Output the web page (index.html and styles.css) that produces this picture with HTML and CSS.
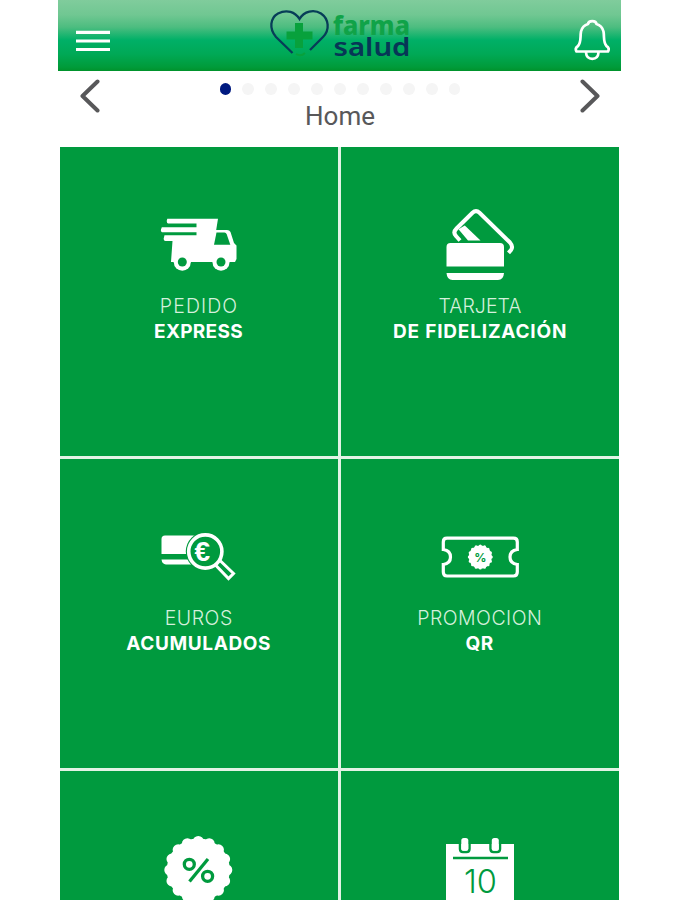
FILE: index.html
```html
<!DOCTYPE html>
<html lang="es">
<head>
<meta charset="utf-8">
<title>Farma Salud</title>
<link rel="stylesheet" href="styles.css">
</head>
<body>
<div class="app">
  <header class="header">
    <svg class="menu" viewBox="0 0 34 22"><path d="M0 2.3H34M0 11H34M0 19.5H34"/></svg>
    <svg class="logo" viewBox="268 8 144 54">
      <path class="heart" d="M291.5 53L275 37C268 29 269 18 277 13.500C286 9 294 12 298.500 19C303 11 313 9 320 13.500C328 19 329 30 322 37L309 50"/>
      <path class="cross" d="M294 23h8v8.500h9.500v8H302V48h-8v-8.500h-8.500v-8h8.500z"/>
      <path class="smile" d="M295 54q5 3 9-1"/>
      <text class="word farma" x="332" y="34.500" textLength="77" lengthAdjust="spacingAndGlyphs">farma</text>
      <text class="word salud" x="332.500" y="56.300" textLength="77" lengthAdjust="spacingAndGlyphs">salud</text>
    </svg>
    <svg class="bell" viewBox="574 18 36 44"><path d="M576.500 51.500Q574.500 48 578 46C581.500 42 580 37 581 31.500Q582.500 25.500 588 24C588.500 20.300 596 20.300 596.500 24Q602 25.500 603.500 31.500C604.500 37 603 42 606.500 46Q610 48 608 51.500ZM586 52.500Q586.500 58.800 592.300 58.800T598.500 52.500"/></svg>
  </header>
  <nav class="pager">
    <svg class="arrow" viewBox="0 0 20 34"><path d="M17.500 2.500L2.500 17L17.500 31.500"/></svg>
    <div class="middle">
      <div class="dots"><i class="on"></i><i></i><i></i><i></i><i></i><i></i><i></i><i></i><i></i><i></i><i></i></div>
      <h1>Home</h1>
    </div>
    <svg class="arrow" viewBox="0 0 20 34"><path d="M2.500 2.500L17.500 17L2.500 31.500"/></svg>
  </nav>
  <main class="grid">
    <a class="tile">
      <svg class="icon" viewBox="159 207 80 76">
        <path class="w" d="M167.300 218.700H218L216.200 230H227Q229.500 230 230.500 232L234 243L236.500 245.500V259L235 262H171L172.500 241H165.500Q163.500 241 163.700 238.500L164.500 235.300H196.500V232.300H162Q160.500 231.500 161 229.500L161.800 227.300H196.500V223.600H168Q166.500 223 166.800 220.500Z"/>
        <path class="g" d="M216.500 232.500H224.500Q226 232.500 226.800 234.500L230.300 244.700H214Z"/>
        <circle class="w" cx="182.300" cy="262.300" r="8.500"/><circle class="w" cx="221" cy="262.300" r="8.500"/>
        <circle class="g" cx="182.300" cy="262" r="4.500"/><circle class="g" cx="221" cy="262" r="4.500"/>
      </svg>
      <span class="thin pedido">PEDIDO</span><b class="express">EXPRESS</b>
    </a>
    <a class="tile">
      <svg class="icon" viewBox="440 207 80 76">
        <path class="line" d="M460 240.500L456 236Q452.500 232.500 456.500 228.500L472.500 212.800Q476 209.500 479.500 212.800L510 242.500Q513.500 246.500 511 250L508.500 252.800"/>
        <path class="w" d="M458.500 229.300L464.800 225.500L480.500 240.500H468Z"/>
        <path class="w" d="M446.500 266.500V247Q446.500 243 450.500 243H500Q504 243 504 247V266.500ZM446.500 273H504Q503.500 280 498 280H452.500Q447 280 446.500 273Z"/>
      </svg>
      <span class="thin tarjeta">TARJETA</span><b class="fidel">DE FIDELIZACIÓN</b>
    </a>
    <a class="tile">
      <svg class="icon" viewBox="159 519 80 76">
        <path class="w" d="M161.500 554V539Q161.500 535.500 165 535.500H195V554ZM161.500 559.500H195V564.500H166Q162 564 161.500 559.500Z"/>
        <circle class="g" cx="205.300" cy="551.500" r="19.500"/>
        <path class="line handle" d="M215 564.500L228.500 578.500L233.500 573.500L219.500 560"/>
        <circle class="line lens" cx="205.300" cy="551.500" r="16.600"/>
        <text class="euro" x="194.500" y="561.200">€</text>
      </svg>
      <span class="thin euros">EUROS</span><b class="acum">ACUMULADOS</b>
    </a>
    <a class="tile">
      <svg class="icon" viewBox="440 519 80 76">
        <path class="line ticket" d="M447 538.200H513.500Q517.300 538.200 517.300 542V549.500Q510 550.500 510 557T517.300 564.500V572Q517.300 576 513.500 576H447Q443.300 576 443.300 572V564.500Q450.500 563.500 450.500 557T443.300 549.500V542Q443.300 538.200 447 538.200Z"/>
        <circle class="w" cx="480.300" cy="557" r="11.500"/><circle class="scallop mini" cx="480.300" cy="557" r="11" pathLength="160"/>
        <text class="pct" x="480.300" y="561.500" text-anchor="middle">%</text>
      </svg>
      <span class="thin promo">PROMOCION</span><b class="qr">QR</b>
    </a>
    <a class="tile">
      <svg class="icon" viewBox="159 830 80 76">
        <circle class="w" cx="198.300" cy="869" r="31.500"/><circle class="scallop" cx="198.300" cy="869" r="28.500" pathLength="160"/>
        <g class="percent"><circle cx="189.300" cy="863.300" r="5"/><circle cx="207.600" cy="875.300" r="5"/><path d="M208 858L189.500 880.500"/></g>
      </svg>
    </a>
    <a class="tile">
      <svg class="icon" viewBox="440 830 80 76">
        <path class="w" d="M446 843H514V906H446Z"/>
        <path class="rule" d="M453 857H508"/>
        <path class="ring" d="M460 842V848Q460 851 463 851H466.500Q469.500 851 469.500 848V842M490.500 842V848Q490.500 851 493.500 851H497Q500 851 500 848V842"/>
        <rect class="w" x="461.300" y="837" width="7" height="12.700" rx="2.500"/><rect class="w" x="491.800" y="837" width="7" height="12.700" rx="2.500"/>
        <text class="day" x="464" y="891.800" textLength="33" lengthAdjust="spacingAndGlyphs">10</text>
      </svg>
    </a>
  </main>
</div>
</body>
</html>
```
FILE: styles.css
```css
body { margin: 0; background: #fff; height: 900px; overflow: hidden; font-family: Inter, "Liberation Sans", sans-serif; }
.app { width: 563px; height: 900px; overflow: hidden; margin-left: 58px; }
.header { height: 71px; box-sizing: border-box; display: flex; justify-content: space-between; align-items: flex-start; padding: 0 11px 0 18px; background: linear-gradient(#80cc9c 0, #70c792 15px, #4dbd80 27px, #00b067 40px, #00a956 54px, #009b3a 67px, #00922b 71px); }
svg { display: block; fill: none; }
.menu { width: 34px; height: 22px; margin-top: 30px; }
.menu path { stroke: #fff; stroke-width: 3.200; }
.logo { width: 144px; height: 54px; margin: 8px 0 0 -3px; overflow: visible; }
.heart { stroke: #073d58; stroke-width: 2.300; }
.cross { fill: #08a13c; }
.smile { stroke: #08a13c; stroke-width: 2; }
.word { font-family: "Noto Sans", sans-serif; font-size: 26px; }
.farma { fill: #10a348; font-weight: 800; }
.salud { fill: #073656; font-weight: 600; }
.bell { width: 36px; height: 44px; margin-top: 18px; }
.bell path { stroke: #fff; stroke-width: 2.700; stroke-linejoin: round; }
.pager { height: 76px; box-sizing: border-box; display: flex; justify-content: space-between; padding: 8px 21px 0 22px; }
.arrow { width: 20px; height: 34px; }
.arrow path { stroke: #58585a; stroke-width: 4; stroke-linecap: round; stroke-linejoin: round; }
.middle { display: flex; flex-direction: column; align-items: center; }
.dots { display: flex; gap: 11px; padding-top: 4px; }
.dots i { width: 11.900px; height: 12px; border-radius: 50%; background: #f5f5f5; }
.dots .on { background: #001a80; }
h1 { margin: 6px 0 0; font: 400 26px/30px Roboto, sans-serif; color: #58585a; }
.grid { display: grid; grid-template-columns: 278px 278px; grid-template-rows: 309px 309px 309px; gap: 3px; width: 559px; margin-left: 2px; background: #e2f3e5; }
.tile { background: #009a3e; display: flex; flex-direction: column; align-items: center; padding-top: 60px; color: #fff; font-size: 19px; line-height: 26px; }
.icon { width: 80px; height: 76px; margin-bottom: 10px; flex: none; }
.thin { font-weight: 300; font-size: 19.500px; color: #d5f0dc; }
.tile b { font-weight: 700; }
.pedido { letter-spacing: 1.100px; margin-right: -.1px; }
.euros, .promo { letter-spacing: .5px; margin-right: .5px; }
.express { letter-spacing: .3px; margin-right: 1px; }
.fidel { letter-spacing: .8px; margin-right: -.3px; }
.acum, .qr { letter-spacing: .6px; margin-right: .6px; }
.w { fill: #fff; }
.g { fill: #009a3e; }
.line { stroke: #fff; stroke-width: 4; }
.handle { stroke-width: 3; }
.lens { stroke-width: 3.600; }
.ticket { stroke-width: 3.200; }
.euro { fill: #fff; font: 700 28px "Liberation Sans", sans-serif; }
.scallop { stroke: #fff; stroke-width: 11; stroke-linecap: round; stroke-dasharray: 0 10; }
.mini { stroke-width: 3; }
.pct { fill: #009a3e; font: 700 12px Inter, sans-serif; }
.percent { stroke: #009a3e; stroke-width: 3.300; }
.rule { stroke: #009a3e; stroke-width: 2.400; }
.ring { stroke: #009a3e; stroke-width: 2.500; }
.day { fill: #009a3e; font: 300 33px Inter, sans-serif; }
```
